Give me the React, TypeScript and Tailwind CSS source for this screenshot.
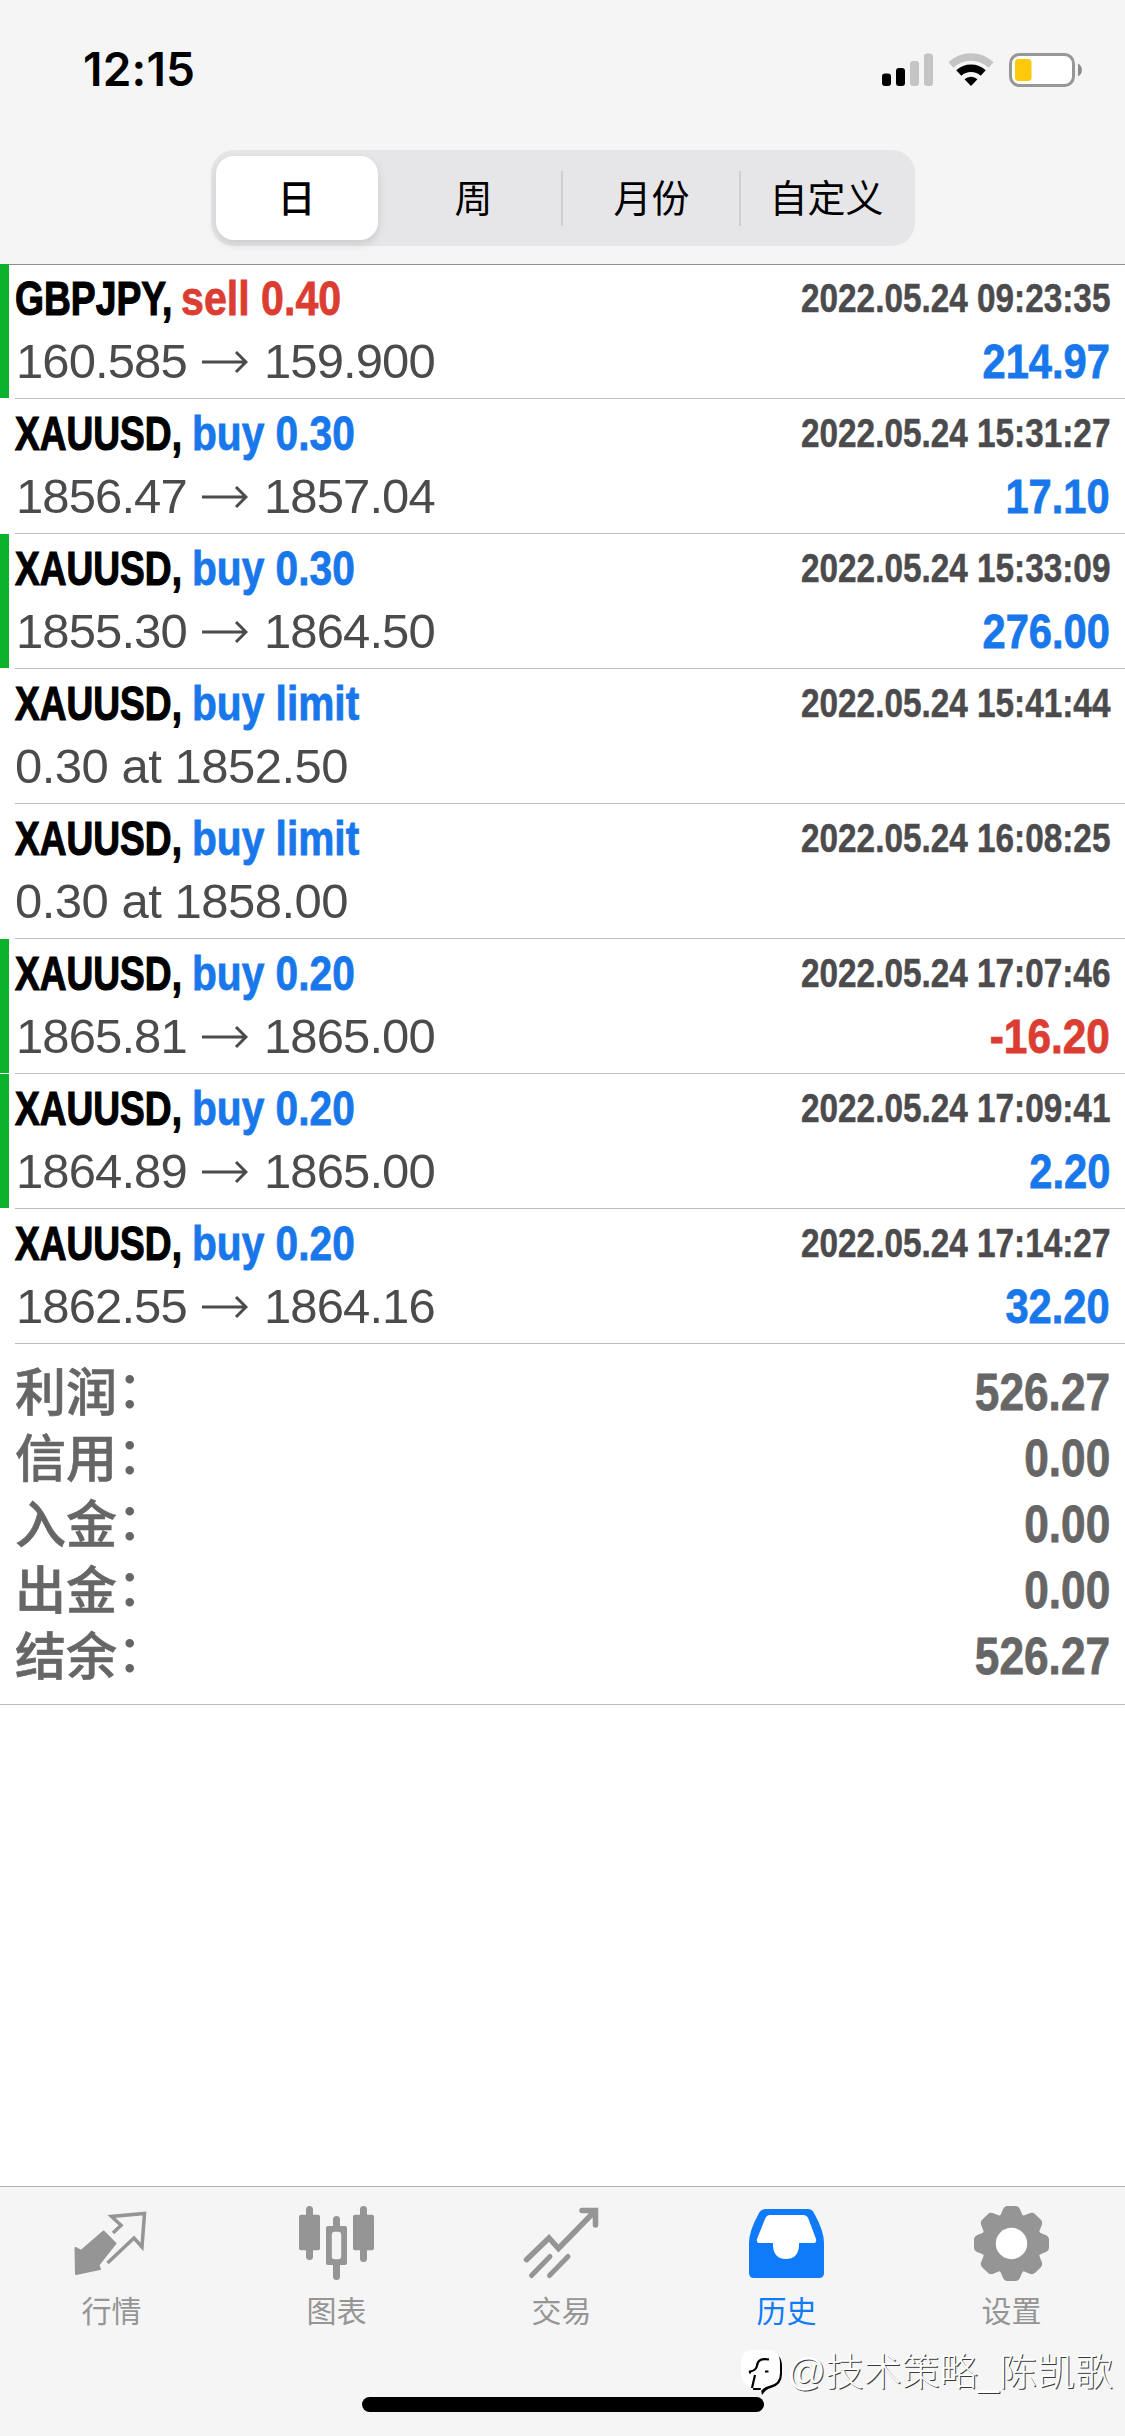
import type { ReactNode } from "react";

interface Deal {
  symbol: string;
  action: string;
  side: "buy" | "sell";
  time: string;
  open?: string;
  close?: string;
  note?: string;
  profit?: string;
  marked?: boolean;
}

const deals: Deal[] = [
  { symbol: "GBPJPY,", action: "sell 0.40", side: "sell", time: "2022.05.24 09:23:35", open: "160.585", close: "159.900", profit: "214.97", marked: true },
  { symbol: "XAUUSD,", action: "buy 0.30", side: "buy", time: "2022.05.24 15:31:27", open: "1856.47", close: "1857.04", profit: "17.10" },
  { symbol: "XAUUSD,", action: "buy 0.30", side: "buy", time: "2022.05.24 15:33:09", open: "1855.30", close: "1864.50", profit: "276.00", marked: true },
  { symbol: "XAUUSD,", action: "buy limit", side: "buy", time: "2022.05.24 15:41:44", note: "0.30 at 1852.50" },
  { symbol: "XAUUSD,", action: "buy limit", side: "buy", time: "2022.05.24 16:08:25", note: "0.30 at 1858.00" },
  { symbol: "XAUUSD,", action: "buy 0.20", side: "buy", time: "2022.05.24 17:07:46", open: "1865.81", close: "1865.00", profit: "-16.20", marked: true },
  { symbol: "XAUUSD,", action: "buy 0.20", side: "buy", time: "2022.05.24 17:09:41", open: "1864.89", close: "1865.00", profit: "2.20", marked: true },
  { symbol: "XAUUSD,", action: "buy 0.20", side: "buy", time: "2022.05.24 17:14:27", open: "1862.55", close: "1864.16", profit: "32.20" },
];

const totals = [
  { label: "利润", value: "526.27" },
  { label: "信用", value: "0.00" },
  { label: "入金", value: "0.00" },
  { label: "出金", value: "0.00" },
  { label: "结余", value: "526.27" },
];

function StatusBar() {
  return (
    <div className="flex h-[150px] items-start justify-between pl-[83px] pr-[42px] pt-[52px]">
      <span className="font-[Inter,sans-serif] text-[46px] font-semibold leading-[35px] tracking-[0.2px] text-black">
        12:15
      </span>
      <svg width="202" height="36" viewBox="881 51 202 36" fill="none">
        <rect x="882" y="72.5" width="9" height="12.5" rx="3" fill="#000" />
        <rect x="896" y="67" width="9" height="18" rx="3" fill="#000" />
        <rect x="910" y="60" width="9" height="25" rx="3" fill="#c4c4c4" />
        <rect x="924" y="52.5" width="9" height="32.5" rx="3" fill="#c4c4c4" />
        <path d="M951 64a29 29 0 0 1 40 0" stroke="#c4c4c4" strokeWidth="7.5" />
        <path d="M958.8 72a18 18 0 0 1 24.4 0" stroke="#000" strokeWidth="7.5" />
        <path d="M964.5 78.2a9.5 9.5 0 0 1 13 0L971 85z" fill="#000" />
        <rect x="1010.5" y="53.5" width="63" height="31" rx="9" fill="#fff" stroke="#979797" strokeWidth="3" />
        <rect x="1015" y="58" width="16.5" height="22" rx="3.5" fill="#fdc90a" />
        <path d="M1078 62.5c5.2 2.6 5.2 10.4 0 13z" fill="#8c8c8c" />
      </svg>
    </div>
  );
}

function PeriodTabs() {
  return (
    <div className="mx-auto flex h-24 w-[704px] items-center rounded-[23px] bg-[#e6e6e8] text-[38px] text-black">
      <div className="ml-[5px] mr-[9px] flex h-[84px] w-[162px] items-center justify-center rounded-[18px] bg-white pt-0.5 font-medium shadow-[0_4px_10px_rgba(0,0,0,0.12)]">
        日
      </div>
      <div className="flex flex-1 justify-center pt-0.5">周</div>
      <div className="h-[55px] w-0.5 bg-[#cfcfd1]" />
      <div className="flex w-[176px] justify-center pl-0.5 pt-0.5">月份</div>
      <div className="h-[55px] w-0.5 bg-[#cfcfd1]" />
      <div className="flex w-[174px] justify-center pr-0.5 pt-0.5">自定义</div>
    </div>
  );
}

function Arrow() {
  return (
    <svg width="46" height="24" viewBox="0 0 46 24" fill="none" stroke="#4b4b4d" strokeWidth="3">
      <path d="M0 12h44M34 2l10 10-10 10" />
    </svg>
  );
}

function DealRow({ deal }: { deal: Deal }) {
  return (
    <div className="flex h-[135px]">
      <div className={deal.marked ? "h-[134px] w-[9px] bg-[#0bb32d]" : "w-[9px]"} />
      <div className="ml-1.5 flex-1 border-b border-[#bdbdbf] pr-[15px] pt-[3px]">
        <div className="flex h-[63px] items-center justify-between font-bold">
          <div className="flex text-[49px] leading-[63px]">
            <span className={deal.side === "sell" ? "w-[166px]" : "w-[177px]"}>
              <span
                className={
                  deal.side === "sell"
                    ? "inline-block origin-left scale-x-[0.76] text-black [-webkit-text-stroke:1.2px_black]"
                    : "inline-block origin-left scale-x-[0.757] text-black [-webkit-text-stroke:1.2px_black]"
                }
              >
                {deal.symbol}
              </span>
            </span>
            <span
              className={
                deal.side === "sell"
                  ? "inline-block origin-left scale-x-[0.84] whitespace-nowrap text-[#dc3d32] [-webkit-text-stroke:0.8px_#dc3d32]"
                  : "inline-block origin-left scale-x-[0.83] whitespace-nowrap text-[#1877ea] [-webkit-text-stroke:0.8px_#1877ea]"
              }
            >
              {deal.action}
            </span>
          </div>
          <span className="origin-right scale-x-[0.833] whitespace-nowrap text-[40px] leading-[63px] text-[#4b4b4d] [-webkit-text-stroke:0.5px_#4b4b4d]">
            {deal.time}
          </span>
        </div>
        <div className="flex h-[63px] items-center justify-between text-[49px] leading-[63px]">
          {deal.note ? (
            <span className="tracking-[-0.5px] text-[#4b4b4d]">{deal.note}</span>
          ) : (
            <div className="flex items-center text-[#4b4b4d]">
              <span className="w-[187px] pl-px tracking-[-0.9px]">{deal.open}</span>
              <Arrow />
              <span className="ml-4 tracking-[-0.9px]">{deal.close}</span>
            </div>
          )}
          {deal.profit && (
            <span
              className={
                deal.profit.startsWith("-")
                  ? "origin-right scale-x-[0.865] font-bold text-[#dc3d32] [-webkit-text-stroke:0.8px_#dc3d32]"
                  : "origin-right scale-x-[0.85] font-bold text-[#1877ea] [-webkit-text-stroke:0.8px_#1877ea]"
              }
            >
              {deal.profit}
            </span>
          )}
        </div>
      </div>
    </div>
  );
}

function Totals() {
  return (
    <div className="h-[361px] border-b border-[#bdbdbf] px-[15px] pt-[15px]">
      {totals.map((t) => (
        <div key={t.label} className="flex h-[66px] items-center justify-between text-[#666]">
          <div className="flex pt-[3px] text-[51px] font-medium leading-[66px]">
            <span className="[-webkit-text-stroke:0.6px_#666]">{t.label}</span>
            <span className="-mt-[3px]">：</span>
          </div>
          <span className="origin-right scale-x-[0.85] text-[52px] font-bold leading-[66px] [-webkit-text-stroke:0.8px_#666]">
            {t.value}
          </span>
        </div>
      ))}
    </div>
  );
}

function TabItem({ label, active, children }: { label: string; active?: boolean; children: ReactNode }) {
  return (
    <div className={`flex w-[225px] flex-col items-center ${active ? "text-[#0f7bf8]" : "text-[#959595]"}`}>
      <svg width="75" height="80" viewBox="0 0 75 80" fill="none" className="mr-0.5 overflow-visible">
        {children}
      </svg>
      <span className="mr-0.5 mt-[7px] text-[30px] leading-[40px]">{label}</span>
    </div>
  );
}

const TEETH = [0, 45, 90, 135, 180, 225, 270, 315];

function TabBar() {
  return (
    <div className="flex h-[250px] border-t border-[#b2b2b2] bg-[#f5f5f5] pt-[18px]">
      <TabItem label="行情">
        <path d="M39 28l8-7.7-9.5-8.8 33-3L68 42l-8-9-26.5 25" stroke="currentColor" strokeWidth="3.5" />
        <path
          d="M29.5 26.5L41.5 38.5 24.5 60 26 64 2 69 1.5 43 7 46z"
          fill="currentColor"
          stroke="currentColor"
          strokeWidth="2"
          strokeLinejoin="round"
        />
      </TabItem>
      <TabItem label="图表">
        <g fill="currentColor">
          <rect x="7" y="1" width="7" height="54" rx="3.5" />
          <rect x="0" y="9.7" width="21" height="35.5" rx="2" />
          <rect x="34" y="11" width="7" height="64" rx="3.5" />
          <rect x="27" y="21" width="21" height="39" rx="2" />
          <rect x="61" y="1" width="7" height="56" rx="3.5" />
          <rect x="54" y="9.7" width="21" height="35.5" rx="2" />
        </g>
        <rect x="32.8" y="26.7" width="9.4" height="27.5" rx="3" fill="#f5f5f5" />
      </TabItem>
      <TabItem label="交易">
        <g stroke="currentColor" strokeLinecap="round">
          <path d="M2.5 54.7L25 33l9.5 10.5L71 6M58 5.5h13.5V20" strokeWidth="5.5" />
          <path d="M7.5 70.5l18.5-19M25.5 70.5l18.5-19" strokeWidth="5" />
        </g>
      </TabItem>
      <TabItem label="历史" active>
        <path
          d="M17 4h42q4 0 6 4Q75 26 75 38v30q0 5-5 5H5q-5 0-5-5V38Q0 26 10 8q2-4 7-4z"
          fill="currentColor"
        />
        <path d="M21 10h33q4 0 5.5 4L67 34q1 4-3 4H50v3q-1 13-13 13T24 41v-3H11q-4 0-3-4l8-20q1.5-4 5-4z" fill="#fff" />
      </TabItem>
      <TabItem label="设置">
        <g fill="currentColor" transform="translate(37.5 38.5)">
          <circle r="29" />
          {TEETH.map((deg) => (
            <path
              key={deg}
              d="M-14-25Q-10.5-28-9-33Q-7.5-37.5-4-37.5H4Q7.5-37.5 9-33Q10.5-28 14-25z"
              transform={`rotate(${deg})`}
            />
          ))}
        </g>
        <circle cx="37.5" cy="38.5" r="15.7" fill="#fff" />
      </TabItem>
    </div>
  );
}

function Watermark() {
  return (
    <div className="absolute bottom-[39px] right-3 flex items-center">
      <svg width="42" height="50" viewBox="0 0 42 50" fill="none" className="mr-1 overflow-visible">
        <path d="M16 6h12q13 0 13 13v8q0 11-11 14-5 1-9 7l-1-5h-8z" fill="#000" />
        <path d="M12 3h14q13 0 13 13v10q0 11-11 13-5 1-9 6l1-4h-8Q0 38 0 26V15Q0 3 12 3z" fill="#fff" />
        <path d="M28 12.5q-11-2-12 6-.5 5-7 6v2M14 28l-3 13M24 24.500h3.500" stroke="#000" strokeWidth="2.2" />
      </svg>
      <span className="whitespace-nowrap text-[38px] font-light leading-[50px] text-white [text-shadow:1px_1px_0_#3a3a3a]">
        @技术策略_陈凯歌
      </span>
    </div>
  );
}

export default function App() {
  return (
    <div className="relative flex h-[2436px] w-[1125px] flex-col overflow-hidden bg-white font-['Liberation_Sans','Noto_Sans_CJK_SC',sans-serif]">
      <div className="h-[265px] shrink-0 border-b border-[#8e8e90] bg-[#f5f5f5]">
        <StatusBar />
        <PeriodTabs />
      </div>
      <div className="flex-1">
        {/* the first row tucks under the header rule */}
        <div className="-mt-px">
          {deals.map((deal) => (
            <DealRow key={deal.time} deal={deal} />
          ))}
        </div>
        <Totals />
      </div>
      <TabBar />
      {/* home indicator */}
      <div className="absolute bottom-6 left-[362px] h-[15px] w-[402px] rounded-full bg-black" />
      <Watermark />
    </div>
  );
}
